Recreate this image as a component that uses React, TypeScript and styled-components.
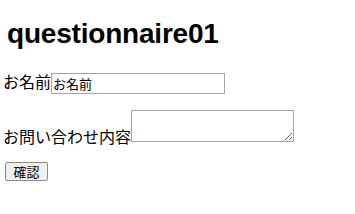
import React from 'react'
import styled, { createGlobalStyle } from 'styled-components';

const GlobalStyle = createGlobalStyle`
    body {
        margin: 8px 8px 8px 3px;
        background: #fff;
        color: #000;
        font-family: "Liberation Sans", "Noto Sans CJK JP", sans-serif;
    }
`

const Title = styled.h1`
    margin: 10px 0 0;
    padding-left: 4px;
    font-size: 28px;
    line-height: 32px;
    font-weight: bold;
    letter-spacing: -0.2px;
`

const Form = styled.form`
    display: flex;
    flex-direction: column;
    align-items: flex-start;
`

type rowPropType = {
    $bottom?: boolean;
    $gap: number;
}
const Row = styled.div<rowPropType>`
    display: flex;
    align-items: ${({ $bottom }) => $bottom ? "flex-end" : "flex-start"};
    margin-top: ${({ $gap }) => $gap}px;
`

const Label = styled.label<{ $drop?: number }>`
    font-family: "Noto Sans CJK JP", sans-serif;
    font-size: 16px;
    line-height: 16px;
    margin-bottom: ${({ $drop }) => $drop ? -$drop : 0}px;
`

const TextInput = styled.input`
    box-sizing: border-box;
    width: 174px;
    height: 21px;
    margin: 0;
    padding: 0 1px;
    border: 1px solid #a5a5a5;
    font-family: "Noto Sans CJK JP", sans-serif;
    font-size: 13px;
    color: #000;
    outline: none;
`

const TextArea = styled.textarea`
    box-sizing: border-box;
    width: 163px;
    height: 32px;
    margin: 0;
    padding: 2px;
    border: 1px solid #a5a5a5;
    font-family: "Noto Sans CJK JP", sans-serif;
    font-size: 13px;
    outline: none;
`

const Button = styled.button`
    box-sizing: border-box;
    width: 43px;
    height: 19px;
    margin: 20px 0 0 2px;
    padding: 0;
    border: 1px solid #8c8c8c;
    border-radius: 2px;
    background: #efefef;
    font-family: "Noto Sans CJK JP", sans-serif;
    font-size: 13px;
    line-height: 17px;
    color: #000;
`

const App = () => {
    return (<>
        <GlobalStyle />
        <Title>questionnaire01</Title>
        <Form onSubmit={(e) => e.preventDefault()}>
            <Row $gap={23}>
                <Label htmlFor="name">お名前</Label>
                <TextInput id="name" type="text" defaultValue="お名前" />
            </Row>
            <Row $gap={16} $bottom>
                <Label htmlFor="content" $drop={2}>お問い合わせ内容</Label>
                <TextArea id="content" />
            </Row>
            <Button type="submit">確認</Button>
        </Form>
    </>
    )
}

export default App;
